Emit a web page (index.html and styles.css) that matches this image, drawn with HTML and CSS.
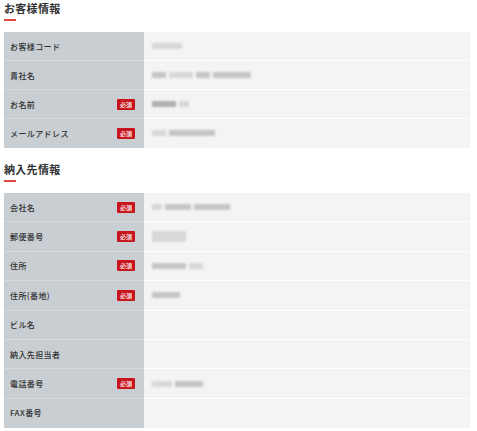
FILE: index.html
```html
<!DOCTYPE html>
<html lang="ja">
<head>
<meta charset="utf-8">
<link rel="stylesheet" href="styles.css">
</head>
<body>
<section class="sec">
  <h2 class="title">お客様情報</h2>
  <div class="table">
    <div class="row"><div class="label">お客様コード</div><div class="value"><span class="blur light" style="width:30px"></span></div></div>
    <div class="row"><div class="label">貴社名</div><div class="value"><span class="blur" style="width:14px"></span><span class="blur light" style="width:24px"></span><span class="blur" style="width:14px"></span><span class="blur" style="width:38px"></span></div></div>
    <div class="row"><div class="label">お名前<span class="req">必須</span></div><div class="value"><span class="blur dark" style="width:24px"></span><span class="blur light" style="width:10px"></span></div></div>
    <div class="row"><div class="label">メールアドレス<span class="req">必須</span></div><div class="value"><span class="blur light" style="width:14px"></span><span class="blur" style="width:46px"></span></div></div>
  </div>
</section>
<section class="sec sec2">
  <h2 class="title">納入先情報</h2>
  <div class="table">
    <div class="row"><div class="label">会社名<span class="req">必須</span></div><div class="value"><span class="blur light" style="width:10px"></span><span class="blur" style="width:26px"></span><span class="blur" style="width:36px"></span></div></div>
    <div class="row"><div class="label">郵便番号<span class="req">必須</span></div><div class="value"><span class="blur light tall" style="width:34px"></span></div></div>
    <div class="row"><div class="label">住所<span class="req">必須</span></div><div class="value"><span class="blur" style="width:34px"></span><span class="blur light" style="width:14px"></span></div></div>
    <div class="row"><div class="label">住所(番地)<span class="req">必須</span></div><div class="value"><span class="blur" style="width:28px"></span></div></div>
    <div class="row"><div class="label">ビル名</div><div class="value"></div></div>
    <div class="row"><div class="label">納入先担当者</div><div class="value"></div></div>
    <div class="row"><div class="label">電話番号<span class="req">必須</span></div><div class="value"><span class="blur light" style="width:20px"></span><span class="blur" style="width:28px"></span></div></div>
    <div class="row"><div class="label">FAX番号</div><div class="value"></div></div>
  </div>
</section>
</body>
</html>
```
FILE: styles.css
```css
html, body {
  margin: 0;
  padding: 0;
  background: #ffffff;
}
body {
  font-family: "Noto Sans CJK JP", "Noto Sans", sans-serif;
  color: #333333;
  padding: 0 7px 0 4px;
}
.sec2 {
  margin-top: 13px;
}
.title {
  margin: 0;
  font-size: 11px;
  line-height: 16px;
  font-weight: bold;
  color: #333333;
  letter-spacing: 0.3px;
}
.title::after {
  content: "";
  display: block;
  width: 12px;
  height: 2px;
  background: #e0473f;
  margin-top: 3px;
  margin-bottom: 11px;
}
.table {
  display: flex;
  flex-direction: column;
}
.row {
  display: grid;
  grid-template-columns: 140px 1fr;
  height: 29px;
}
.sec2 .row {
  height: 29.4px;
}
.label {
  background: #c9ced3;
  border-bottom: 1px solid #d6dadd;
  display: flex;
  align-items: center;
  justify-content: space-between;
  padding: 0 9px 0 6px;
  font-size: 8px;
  font-weight: 500;
  letter-spacing: 0.4px;
  color: #2e2e2e;
}
.row:last-child .label, .row:last-child .value {
  border-bottom-color: transparent;
}
.value {
  background: #f4f4f4;
  border-bottom: 1px solid #ffffff;
  display: flex;
  align-items: center;
  gap: 3px;
  padding-left: 8px;
}
.req {
  background: #c8151d;
  color: #ffffff;
  font-size: 6px;
  line-height: 11px;
  width: 18px;
  text-align: center;
  border-radius: 1px;
  letter-spacing: 0;
}
.blur {
  display: inline-block;
  height: 6px;
  background: #c6c6c6;
  filter: blur(1.1px);
}
.blur.light {
  background: #d8d8d8;
}
.blur.dark {
  background: #b0b0b0;
}
.blur.tall {
  height: 11px;
}
```
